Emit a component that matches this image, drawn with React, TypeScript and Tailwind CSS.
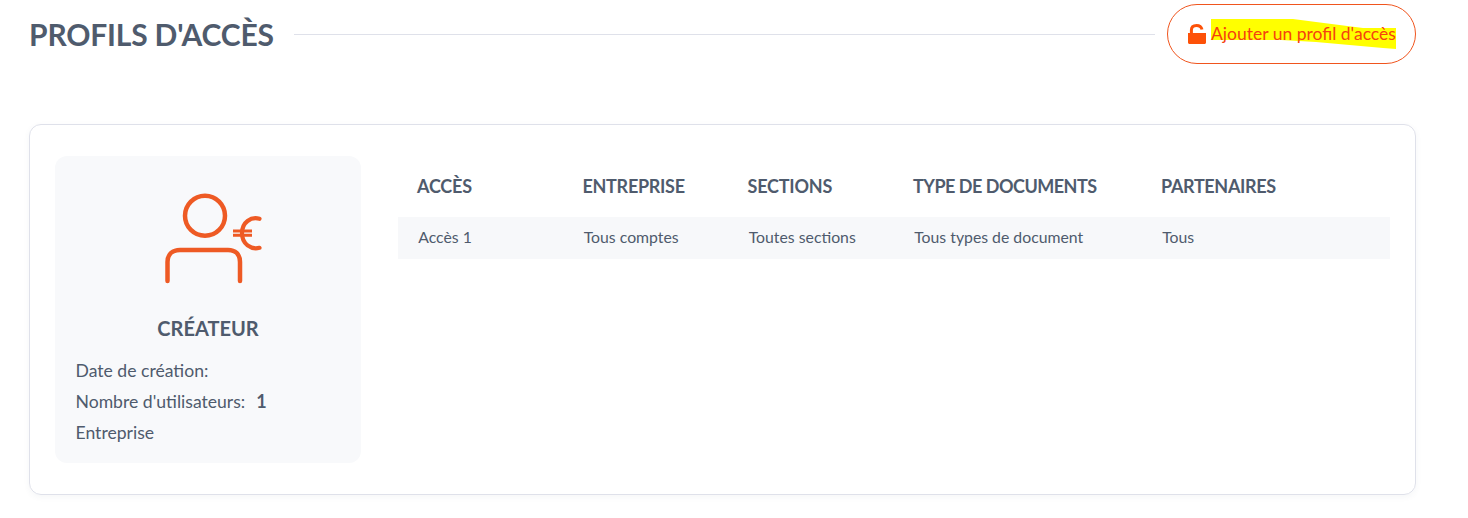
import React from "react";

const cols = [
  { h: "ACCÈS", v: "Accès 1", w: "w-[165.5px]", t: "tracking-[-0.2px]" },
  { h: "ENTREPRISE", v: "Tous comptes", w: "w-[165px]", t: "tracking-[-0.3px]" },
  { h: "SECTIONS", v: "Toutes sections", w: "w-[165.5px]", t: "tracking-[-0.2px]" },
  { h: "TYPE DE DOCUMENTS", v: "Tous types de document", w: "w-[248px]", t: "tracking-[-0.5px]" },
  { h: "PARTENAIRES", v: "Tous", w: "flex-1", t: "tracking-[-0.35px]" },
];

function UserEuro() {
  return (
    <svg width="100" height="100" viewBox="0 0 100 100" fill="none" stroke="#ee5a24" strokeWidth="4.5" strokeLinecap="round">
      <circle cx="42" cy="23.7" r="20" />
      <path d="M4.5 89V70C4.5 62 10 58 17 58H65C72 58 77 62 77 70V89" />
      <path d="M96.5 26.8C88 24.5 79 30 79 41.3C79 52 88 58 96.5 55.8" strokeWidth="4.2" />
      <path d="M70 39H89M70 43.2H89" strokeWidth="3" strokeLinecap="butt" />
    </svg>
  );
}

export default function App() {
  return (
    <div className="w-[1468px] h-[518px] bg-white overflow-hidden text-[#4d5a6e] font-['Lato','Liberation_Sans',sans-serif]">
      <div className="ml-[29px] w-[1387px] pt-1 flex items-center h-[60px] box-content">
        <h1 className="text-[30px] leading-none font-bold text-[#4f5b6d] tracking-[-0.18px] whitespace-nowrap">PROFILS D'ACCÈS</h1>
        <div className="flex-1 h-px bg-[#dfe1ea] ml-[20px] mr-3" />
        <button className="relative w-[249px] h-[60px] rounded-[30px] border border-[#f0551e] flex items-center pl-5 gap-[5px] bg-white">
          <svg width="18" height="20" viewBox="0 0 18 20" fill="#fd5108" className="shrink-0">
            <path d="M0 9H18V18.5C18 19.3 17.3 20 16.5 20H1.5C.7 20 0 19.3 0 18.5Z" />
            <path d="M3.4 9V6C3.4 3 5.5 1.5 8.5 1.5C11.5 1.5 13.4 3 14 5.5" fill="none" stroke="#fd5108" strokeWidth="3" />
          </svg>
          <span className="relative text-[17.5px] leading-none text-[#f5420f] whitespace-nowrap mb-[1px]">
            <svg className="absolute left-0 top-[-6px]" width="186" height="32" viewBox="0 0 186 32" fill="#ffff00">
              <polygon points="0,0 82,0 105,3 152,9 185,9 185,30 172,29 105,23 70,21 0,21" />
            </svg>
            <span className="relative">Ajouter un profil d'accès</span>
          </span>
        </button>
      </div>

      <div className="ml-[29px] mt-[60px] w-[1387px] h-[371px] rounded-[12px] border border-[#dfe1ea] shadow-[0_2px_6px_rgba(60,70,100,0.05)] pt-[31px] pl-[25px] pr-[25px] flex">
        <div className="w-[306px] h-[307px] bg-[#f8f9fb] rounded-[12px] flex flex-col">
          <div className="flex justify-center pt-[36px] pl-[10px] h-[149px]">
            <UserEuro />
          </div>
          <div className="mt-[10px] text-center text-[20px] leading-[26px] font-bold text-[#4f5b6d]">CRÉATEUR</div>
          <div className="mt-[14px] pl-[20.5px] text-[17.6px] leading-[31px] text-[#4f5b6d]">
            <div>Date de création:</div>
            <div className="flex items-baseline gap-[11px]">
              <span>Nombre d'utilisateurs:</span>
              <span className="font-bold text-[18px]">1</span>
            </div>
            <div>Entreprise</div>
          </div>
        </div>

        <div className="ml-[37px] flex-1 -mt-[1px]">
          <div className="flex pt-[17px] h-[62px]">
            {cols.map((c) => (
              <div key={c.h} className={`${c.w} ${c.t} pl-[19px] text-[18px] leading-[28px] font-bold text-[#4f5b6d] whitespace-nowrap`}>
                {c.h}
              </div>
            ))}
          </div>
          <div className="flex bg-[#f7f8fa] h-[42px] items-center pb-[2px]">
            {cols.map((c) => (
              <div key={c.h} className={`${c.w} pl-[20.2px] text-[15.8px] text-[#4f5b6d] whitespace-nowrap`}>
                {c.v}
              </div>
            ))}
          </div>
        </div>
      </div>
    </div>
  );
}
